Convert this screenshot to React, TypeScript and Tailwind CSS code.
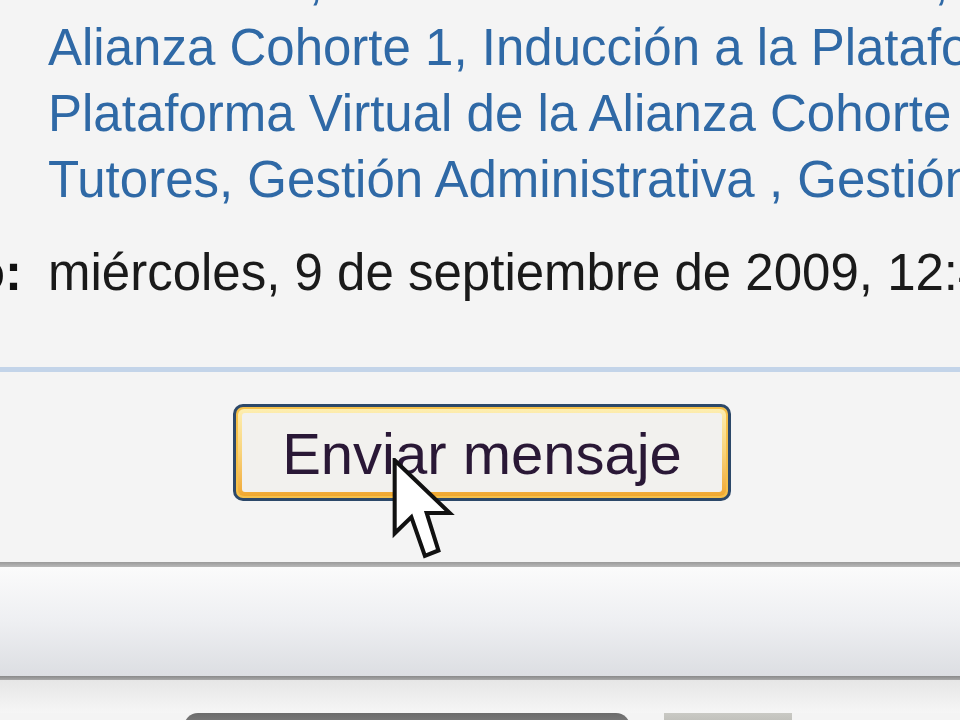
import React from "react";

function Cursor() {
  return (
    <svg
      className="absolute left-[392px] top-[458px]"
      width="64"
      height="106"
      viewBox="-0.5 -0.5 14 23.5"
    >
      <path
        d="M0 0 L0 16.2 L3.7 12.6 L6.7 21.2 L9.7 20 L7.1 11.7 L12.2 11.7 Z"
        fill="#ffffff"
        stroke="#111111"
        strokeWidth="0.9"
        strokeLinejoin="miter"
      />
    </svg>
  );
}

export default function App() {
  return (
    <div
      className="relative w-[960px] h-[720px] overflow-hidden bg-[#f4f4f4] flex flex-col"
      style={{ fontFamily: '"Liberation Sans", Arial, sans-serif' }}
    >
      <div className="pl-[48px] text-[51px] leading-[66px] text-[#2f69a6] whitespace-nowrap mt-[-51px]">
        <div>Orientación, Gestión Académica Virtual, Plataforma</div>
        <div>Alianza Cohorte 1, Inducción a la Plataforma</div>
        <div>Plataforma Virtual de la Alianza Cohorte 1</div>
        <div>Tutores, Gestión Administrativa , Gestión</div>
      </div>

      <div className="mt-[27px] flex items-baseline gap-[26px] text-[51px] leading-[66px] whitespace-nowrap">
        <div className="w-[22px] flex justify-end">
          <span className="font-bold text-[#111]">Enviado:</span>
        </div>
        <span className="text-[#1a1a1a]">miércoles, 9 de septiembre de 2009, 12:45</span>
      </div>

      <div className="mt-[61px] h-[5px] bg-[#c3d4e9] shrink-0" />

      <div className="mt-[32px] flex justify-center pl-[4px] shrink-0">
        <div className="w-[498px] h-[97px] rounded-[10px] border-[3px] border-[#2c4869] bg-[#f5c04a] p-[2px]">
          <div className="w-full h-full rounded-[6px] bg-gradient-to-b from-[#fdeeb0] via-[#f8d37a] to-[#f0a830] p-[4px]">
            <div className="w-full h-full rounded-[3px] bg-[#f2f1ee] flex items-center justify-center text-[58px] text-[#2a1836] leading-none pt-[2px]">
              Enviar mensaje
            </div>
          </div>
        </div>
      </div>

      <div className="mt-[61px] h-[5px] bg-gradient-to-b from-[#9a9a9a] to-[#b8b8b8] shrink-0" />
      <div className="h-[109px] bg-gradient-to-b from-[#fbfbfb] via-[#eeeff2] to-[#dcdee2] shrink-0" />
      <div className="h-[4px] bg-gradient-to-b from-[#8a8a8a] to-[#a8a8a8] shrink-0" />
      <div className="h-[33px] bg-gradient-to-b from-[#e6e6e6] to-[#f6f6f6] shrink-0" />
      <div className="flex gap-[34px] pl-[184px] shrink-0">
        <div className="w-[446px] h-[20px] rounded-t-[14px] bg-gradient-to-b from-[#6b6b6b] to-[#8a8a8a]" />
        <div className="w-[128px] h-[20px] bg-gradient-to-b from-[#c9c9c4] to-[#b5b5b0]" />
      </div>

      <Cursor />
    </div>
  );
}
